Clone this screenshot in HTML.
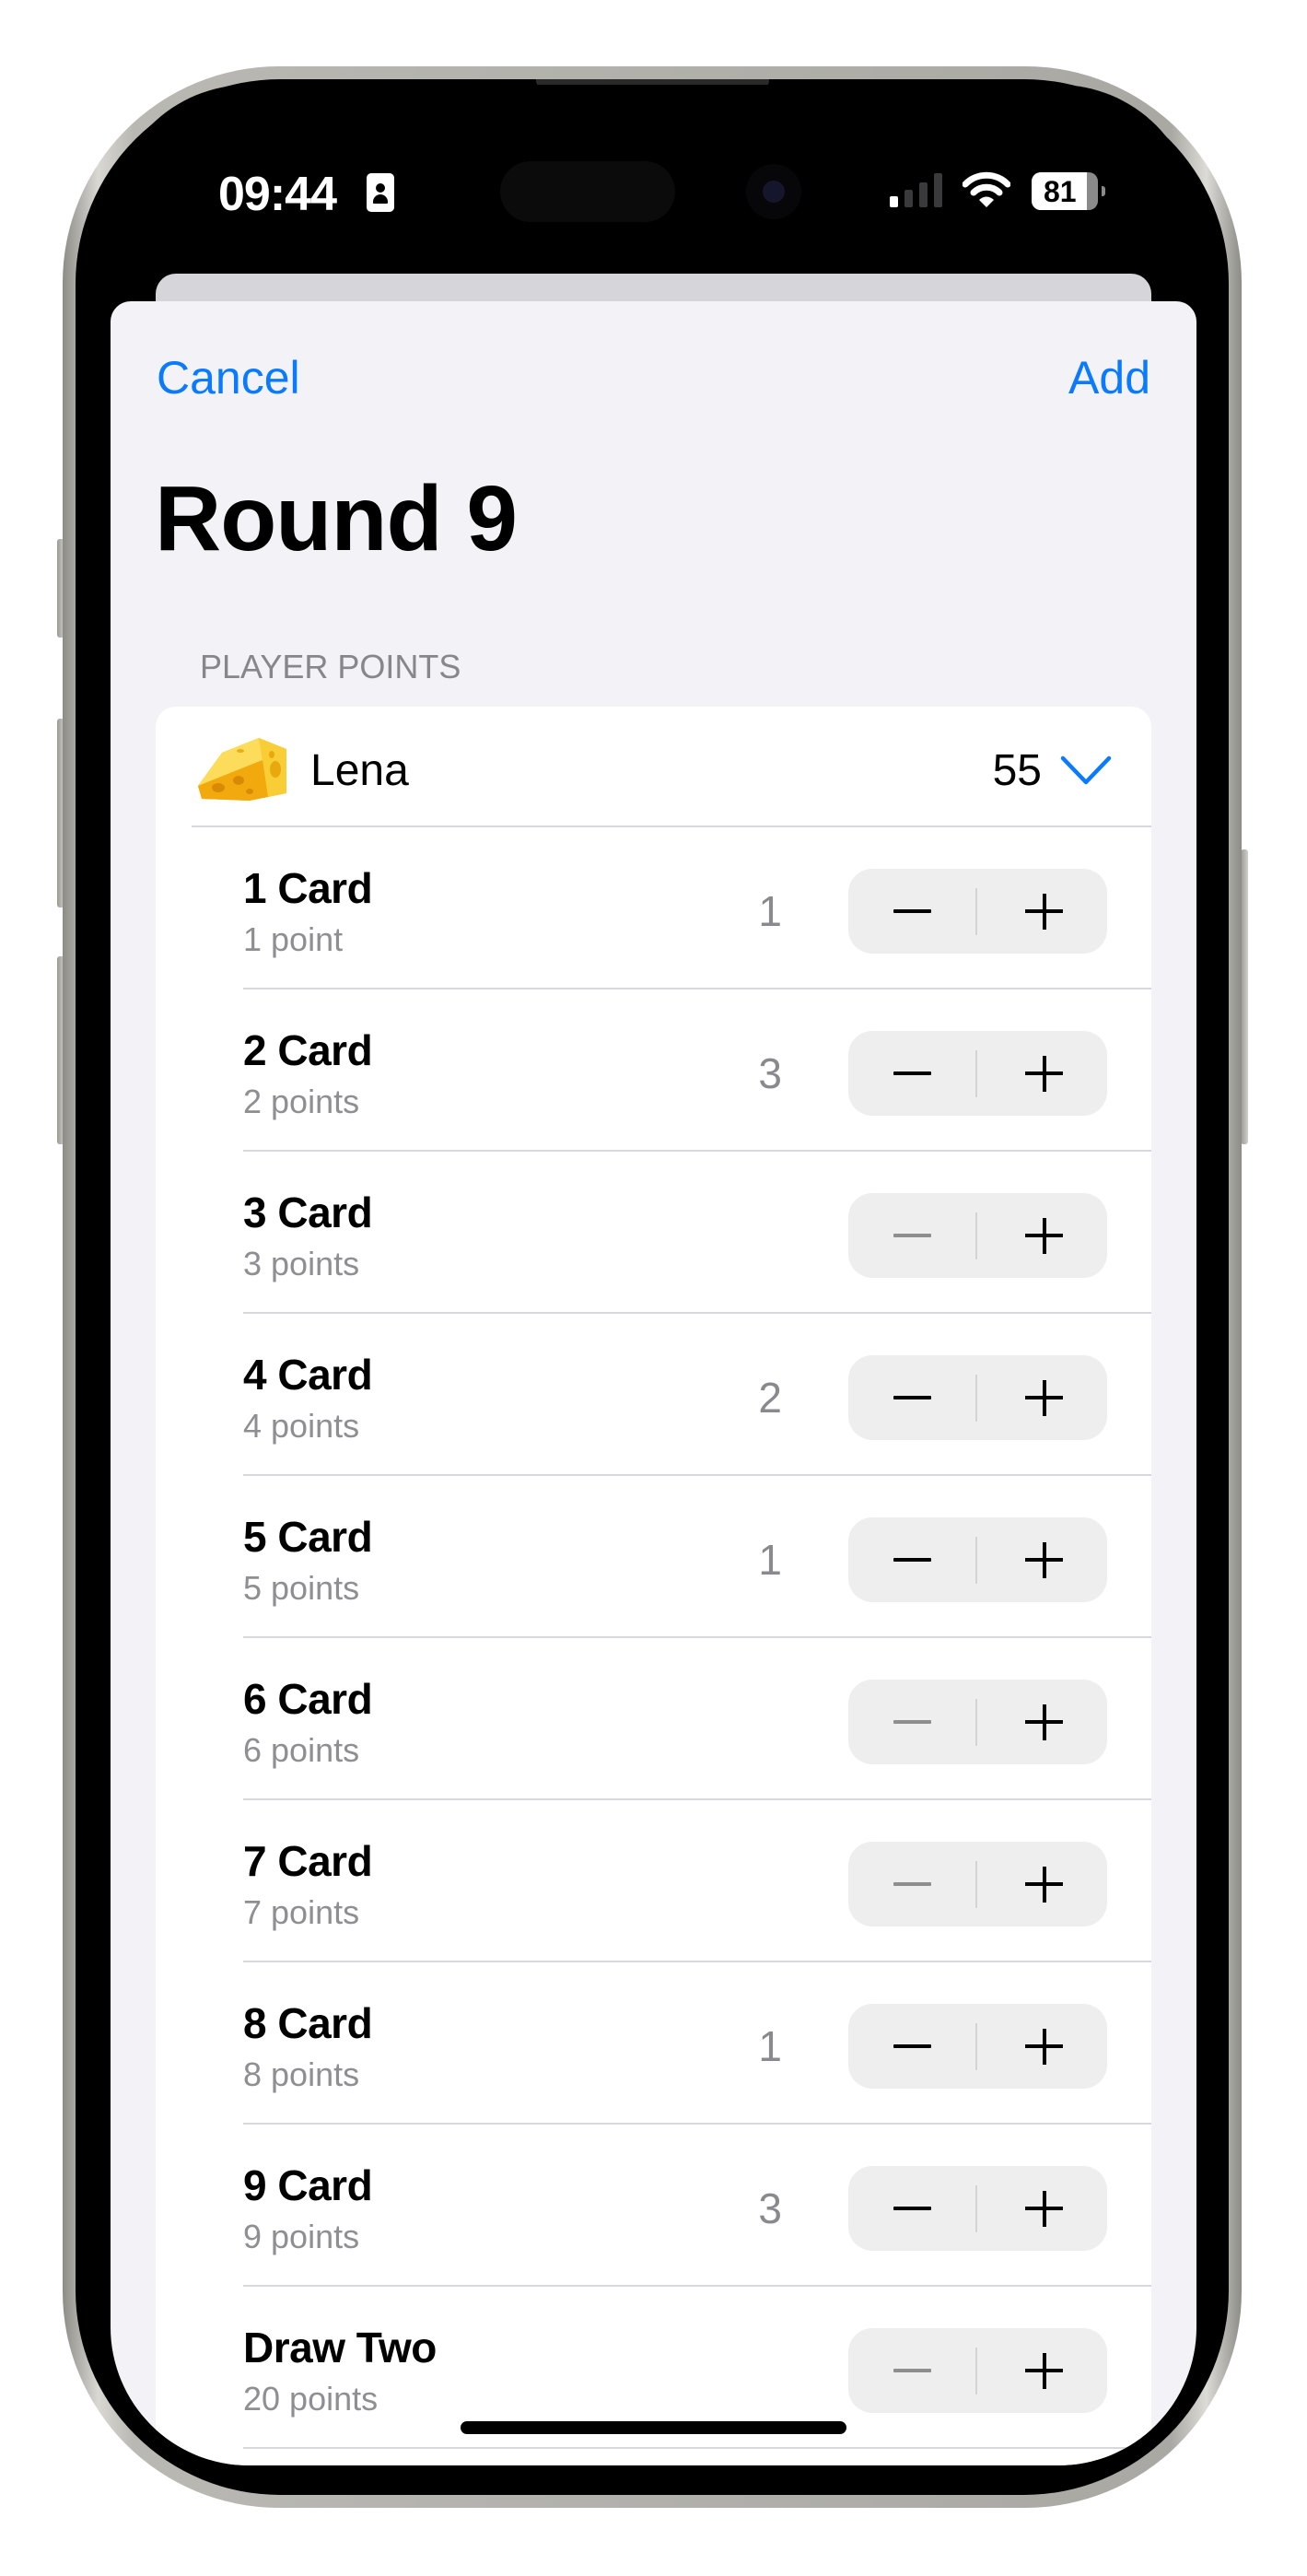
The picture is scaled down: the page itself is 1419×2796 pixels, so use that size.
<!DOCTYPE html>
<html><head><meta charset="utf-8"><style>
*{margin:0;padding:0;box-sizing:border-box}
body{width:1419px;height:2796px;background:#fff;position:relative;overflow:hidden;font-family:"Liberation Sans",sans-serif}
.abs{position:absolute}
.frame{left:68px;top:72px;width:1280px;height:2650px;border-radius:235px;background:linear-gradient(90deg,#8d8c87,#d9d8d3 3%,#b9b8b3 6%,#a9a8a3 94%,#dcdbd6 97%,#8d8c87);}
.bezel{left:82px;top:86px;width:1252px;height:2622px;border-radius:222px;background:#000}
.screen{left:120px;top:92px;width:1179px;height:2584px;border-radius:150px;background:#000;overflow:hidden}
.btn{background:linear-gradient(90deg,#9a9994,#d0cfca);border-radius:3px}
.sheet{left:0;top:235px;width:1179px;height:2400px;background:#f2f2f7;border-radius:22px 22px 0 0}
.card{left:49px;top:675px;width:1081px;height:2000px;background:#fff;border-radius:22px}
.row{position:absolute;left:0;width:1081px;height:176px}
.sep{position:absolute;left:95px;right:0;bottom:0;height:2px;background:#d8d8dc}
.t{position:absolute;left:95px;top:43px;font-size:46px;line-height:46px;font-weight:bold;color:#000;letter-spacing:-0.5px}
.s{position:absolute;left:95px;top:104px;font-size:36px;line-height:36px;color:#8e8e93}
.n{position:absolute;right:401px;top:68px;font-size:46px;line-height:46px;color:#8a8a8e}
.st{position:absolute;left:752px;top:45px;width:281px;height:92px;border-radius:26px;background:#eeeeef}
.st .d{position:absolute;left:138px;top:21px;width:2px;height:51px;background:#d4d4d6}
.st .m{position:absolute;left:49px;top:44px;width:41px;height:4px;background:#000;border-radius:1px}
.st .m.dis{background:#8e8e8e}
.st .p1{position:absolute;left:192px;top:44px;width:41px;height:4px;background:#000}
.st .p2{position:absolute;left:210.5px;top:27px;width:4px;height:39px;background:#000}
</style></head><body>
<div class="abs btn" style="left:62px;top:585px;width:8px;height:107px"></div>
<div class="abs btn" style="left:62px;top:780px;width:8px;height:205px"></div>
<div class="abs btn" style="left:62px;top:1038px;width:8px;height:204px"></div>
<div class="abs btn" style="left:1347px;top:922px;width:8px;height:320px"></div>
<div class="abs frame"></div>
<div class="abs bezel"></div>
<div class="abs" style="left:582px;top:86px;width:253px;height:8px;background:#2a2a2a;border-radius:0 0 6px 6px"></div>
<div class="abs screen">
  <div class="abs" style="left:117px;top:93px;font-size:52px;line-height:52px;font-weight:bold;color:#fff;letter-spacing:-1px">09:44</div>
  <div class="abs" style="left:278px;top:96px;width:30px;height:42px;background:#fff;border-radius:5px">
    <div class="abs" style="left:10px;top:11px;width:10px;height:10px;border-radius:50%;background:#000"></div>
    <div class="abs" style="left:7px;top:23px;width:16px;height:10px;border-radius:8px 8px 1px 1px;background:#000"></div>
  </div>
  <div class="abs" style="left:423px;top:83px;width:190px;height:66px;border-radius:33px;background:#0b0b0c"></div>
  <div class="abs" style="left:690px;top:86px;width:60px;height:60px;border-radius:50%;background:#070709"></div>
  <div class="abs" style="left:708px;top:104px;width:24px;height:24px;border-radius:50%;background:#15152c"></div>
  <div class="abs" style="left:846px;top:121px;width:9px;height:12px;border-radius:2px;background:#fff"></div>
  <div class="abs" style="left:862px;top:114px;width:9px;height:19px;border-radius:2px;background:#3a3a3c"></div>
  <div class="abs" style="left:878px;top:106px;width:9px;height:27px;border-radius:2px;background:#3a3a3c"></div>
  <div class="abs" style="left:894px;top:96px;width:9px;height:37px;border-radius:2px;background:#3a3a3c"></div>
  <svg class="abs" style="left:925px;top:94px" width="52" height="40" viewBox="0 0 52 40">
    <path d="M3 14 A32 32 0 0 1 49 14" stroke="#fff" stroke-width="7" fill="none" stroke-linecap="round"/>
    <path d="M12 23 A20 20 0 0 1 40 23" stroke="#fff" stroke-width="7" fill="none" stroke-linecap="round"/>
    <path d="M18 31 L26 39 L34 31 A11 11 0 0 0 18 31Z" fill="#fff"/>
  </svg>
  <div class="abs" style="left:1000px;top:95px;width:72px;height:41px;border-radius:10px;background:#8a8a8a;overflow:hidden">
    <div class="abs" style="left:0;top:0;width:60px;height:41px;background:#fff"></div>
    <div class="abs" style="left:13px;top:5px;font-size:32px;line-height:32px;font-weight:bold;color:#000">81</div>
  </div>
  <div class="abs" style="left:1076px;top:110px;width:4px;height:11px;border-radius:0 3px 3px 0;background:#8a8a8a"></div>

  <div class="abs" style="left:49px;top:205px;width:1081px;height:60px;background:#d5d5da;border-radius:22px"></div>
  <div class="abs sheet"></div>
  <div class="abs" style="left:50px;top:288px;font-size:50px;line-height:60px;color:#0a7aff">Cancel</div>
  <div class="abs" style="right:50px;top:288px;font-size:50px;line-height:60px;color:#0a7aff">Add</div>
  <div class="abs" style="left:48px;top:421px;font-size:100px;line-height:100px;font-weight:bold;color:#000;letter-spacing:-1px">Round 9</div>
  <div class="abs" style="left:97px;top:614px;font-size:36px;line-height:36px;color:#86868b">PLAYER POINTS</div>

  <div class="abs card">
    <svg class="abs" style="left:42px;top:28px" width="104" height="76" viewBox="0 0 104 76">
      <path d="M4 58 L30 22 L70 6 L100 18 L100 66 L60 74 L8 72 Z" fill="#f6b71c"/>
      <path d="M70 6 L100 18 L100 66 L80 70 L74 30 Z" fill="#f9cd36"/>
      <path d="M4 58 L30 22 L70 6 L74 30 Z" fill="#fddc5c"/>
      <path d="M4 58 L74 30 L80 70 L60 74 L8 72Z" fill="#f2a90e"/>
      <ellipse cx="26" cy="60" rx="7" ry="5" fill="#d98a05"/>
      <ellipse cx="48" cy="52" rx="6" ry="5" fill="#d98a05"/>
      <ellipse cx="60" cy="64" rx="4" ry="3" fill="#d98a05"/>
      <ellipse cx="88" cy="40" rx="6" ry="9" fill="#e9a90e"/>
      <ellipse cx="84" cy="24" rx="3" ry="4" fill="#e9a90e"/>
      <ellipse cx="50" cy="20" rx="4" ry="2" fill="#e9ae1a"/>
    </svg>
    <div class="abs" style="left:168px;top:46px;font-size:48px;line-height:48px;color:#000">Lena</div>
    <div class="abs" style="right:119px;top:46px;font-size:48px;line-height:48px;color:#000">55</div>
    <svg class="abs" style="left:982px;top:53px" width="56" height="33" viewBox="0 0 56 33">
      <path d="M3 3 L28 29 L53 3" stroke="#0a7aff" stroke-width="4.5" fill="none" stroke-linecap="round" stroke-linejoin="round"/>
    </svg>
    <div class="abs" style="left:39px;top:129px;right:0;height:2px;background:#d8d8dc"></div>

    <div class="row" style="top:131px"><div class="t">1 Card</div><div class="s">1 point</div><div class="n">1</div><div class="st"><div class="m"></div><div class="d"></div><div class="p1"></div><div class="p2"></div></div><div class="sep"></div></div>
    <div class="row" style="top:307px"><div class="t">2 Card</div><div class="s">2 points</div><div class="n">3</div><div class="st"><div class="m"></div><div class="d"></div><div class="p1"></div><div class="p2"></div></div><div class="sep"></div></div>
    <div class="row" style="top:483px"><div class="t">3 Card</div><div class="s">3 points</div><div class="st"><div class="m dis"></div><div class="d"></div><div class="p1"></div><div class="p2"></div></div><div class="sep"></div></div>
    <div class="row" style="top:659px"><div class="t">4 Card</div><div class="s">4 points</div><div class="n">2</div><div class="st"><div class="m"></div><div class="d"></div><div class="p1"></div><div class="p2"></div></div><div class="sep"></div></div>
    <div class="row" style="top:835px"><div class="t">5 Card</div><div class="s">5 points</div><div class="n">1</div><div class="st"><div class="m"></div><div class="d"></div><div class="p1"></div><div class="p2"></div></div><div class="sep"></div></div>
    <div class="row" style="top:1011px"><div class="t">6 Card</div><div class="s">6 points</div><div class="st"><div class="m dis"></div><div class="d"></div><div class="p1"></div><div class="p2"></div></div><div class="sep"></div></div>
    <div class="row" style="top:1187px"><div class="t">7 Card</div><div class="s">7 points</div><div class="st"><div class="m dis"></div><div class="d"></div><div class="p1"></div><div class="p2"></div></div><div class="sep"></div></div>
    <div class="row" style="top:1363px"><div class="t">8 Card</div><div class="s">8 points</div><div class="n">1</div><div class="st"><div class="m"></div><div class="d"></div><div class="p1"></div><div class="p2"></div></div><div class="sep"></div></div>
    <div class="row" style="top:1539px"><div class="t">9 Card</div><div class="s">9 points</div><div class="n">3</div><div class="st"><div class="m"></div><div class="d"></div><div class="p1"></div><div class="p2"></div></div><div class="sep"></div></div>
    <div class="row" style="top:1715px"><div class="t">Draw Two</div><div class="s">20 points</div><div class="st"><div class="m dis"></div><div class="d"></div><div class="p1"></div><div class="p2"></div></div><div class="sep"></div></div>
  </div>
  <div class="abs" style="left:380px;top:2536px;width:419px;height:14px;border-radius:7px;background:#000"></div>
</div>
</body></html>
